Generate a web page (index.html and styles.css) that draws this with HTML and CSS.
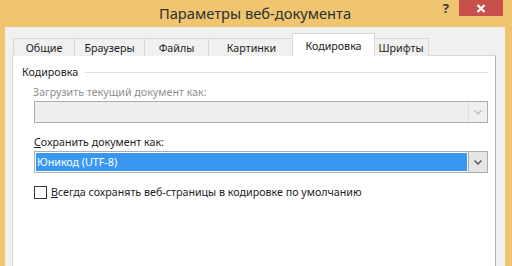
FILE: index.html
```html
<!DOCTYPE html>
<html lang="ru">
<head>
<meta charset="utf-8">
<title>Параметры веб-документа</title>
<link rel="stylesheet" href="styles.css">
</head>
<body>
<div class="window">
  <div class="titlebar">
    <div></div>
    <div class="title">Параметры веб-документа</div>
    <div class="controls">
      <span class="help">?</span>
      <span class="close"><svg width="10" height="9" viewBox="0 0 10 9"><path d="M1.5 1 L8.5 8 M8.5 1 L1.5 8" stroke="#fff" stroke-width="2.2" fill="none"/></svg></span>
    </div>
  </div>
  <div class="frame">
    <div class="tabs">
      <div class="tab t1">Общие</div>
      <div class="tab t2">Браузеры</div>
      <div class="tab t3">Файлы</div>
      <div class="tab t4">Картинки</div>
      <div class="tab active">Кодировка</div>
      <div class="tab t6">Шрифты</div>
    </div>
    <div class="panel">
      <div class="group"><span class="group-label">Кодировка</span><span class="group-line"></span></div>
      <div class="field-label disabled">Загрузить текущий документ как:</div>
      <div class="combo combo-disabled">
        <div class="combo-value"></div>
        <div class="combo-btn"><svg width="8" height="5" viewBox="0 0 8 5"><path d="M0.5 0.5 L4 4 L7.5 0.5" stroke="#b8b8b8" stroke-width="1.3" fill="none"/></svg></div>
      </div>
      <div class="field-label second"><u>С</u>охранить документ как:</div>
      <div class="combo combo-active">
        <div class="combo-value"><span class="sel">Юникод (UTF-8)</span></div>
        <div class="combo-btn"><svg width="8" height="5" viewBox="0 0 8 5"><path d="M0.5 0.5 L4 4 L7.5 0.5" stroke="#555" stroke-width="1.4" fill="none"/></svg></div>
      </div>
      <label class="check"><span class="box"></span><span><u>В</u>сегда сохранять веб-страницы в кодировке по умолчанию</span></label>
    </div>
  </div>
</div>
</body>
</html>
```

FILE: styles.css
```css
html, body {
  margin: 0;
  padding: 0;
}
body {
  width: 512px;
  height: 266px;
  overflow: hidden;
  font-family: "Noto Sans", "Open Sans", sans-serif;
  font-size: 10.7px;
  color: #1e1e1e;
}
.window {
  background: #efc56f;
  height: 266px;
  display: flex;
  flex-direction: column;
}
.titlebar {
  height: 27px;
  display: grid;
  grid-template-columns: 1fr auto 1fr;
  align-items: start;
}
.title {
  font-size: 14.7px;
  color: #2e2e2e;
  line-height: 26px;
  margin-left: -2px;
}
.controls {
  display: flex;
  justify-self: end;
  align-items: flex-start;
  margin-right: 9px;
}
.help {
  font-size: 13px;
  font-weight: bold;
  color: #3a3a3a;
  line-height: 16px;
  margin-right: 10px;
}
.close {
  width: 44px;
  height: 16px;
  background: #c7504d;
  display: flex;
  align-items: center;
  justify-content: center;
}
.frame {
  flex: 1;
  margin: 0 7px 0 5px;
  background: #f0f0f0;
  padding: 7px 9px 0 7px;
  display: flex;
  flex-direction: column;
}
.tabs {
  display: flex;
  align-items: flex-end;
  height: 22px;
  padding-left: 1px;
  margin-bottom: -1px;
  position: relative;
  z-index: 1;
}
.tab {
  height: 17px;
  border: 1px solid #d9d9d9;
  border-bottom: none;
  background: #f0f0f0;
  text-align: center;
  line-height: 18px;
  color: #222;
  margin-right: -1px;
}
.t1 { width: 60px; }
.t2 { width: 69px; }
.t3 { width: 63px; }
.t4 { width: 85px; }
.t6 { width: 54px; }
.tab.active {
  width: 81px;
  height: 22px;
  line-height: 24px;
  background: #fff;
  margin-left: -2px;
  margin-right: -2px;
  position: relative;
  z-index: 2;
}
.panel {
  flex: 1;
  background: #fff;
  border: 1px solid #d9d9d9;
  border-right-color: #b4b4b4;
  border-bottom: none;
  padding: 8px 7px 0 9px;
}
.group {
  display: flex;
  align-items: center;
  height: 16px;
}
.group-label {
  color: #1e1e1e;
}
.group-line {
  flex: 1;
  height: 1px;
  background: #dcdcdc;
  margin-left: 7px;
}
.field-label {
  margin-left: 11px;
  margin-top: 4px;
  height: 16px;
  line-height: 16px;
}
.field-label.disabled {
  color: #8f8f8f;
}
.field-label.second {
  margin-top: 11px;
  margin-left: 12px;
}
.combo {
  margin-left: 12px;
  margin-top: 1px;
  height: 20px;
  border: 1px solid #acacac;
  display: flex;
  background: #fff;
}
.combo-disabled {
  background: #efefef;
}
.combo-value {
  flex: 1;
  display: flex;
  padding: 1px;
}
.sel {
  flex: 1;
  background: #3797f2;
  color: #fff;
  line-height: 18px;
  padding-left: 1px;
}
.combo-btn {
  width: 18px;
  display: flex;
  align-items: center;
  justify-content: center;
}
.combo-active .combo-btn {
  background: #e6e6e6;
  border-left: 1px solid #acacac;
}
.combo-disabled .combo-btn {
  background: #efefef;
  border-left: 1px solid #dedede;
}
.check {
  display: flex;
  align-items: center;
  margin-left: 12px;
  margin-top: 11px;
  height: 16px;
}
.box {
  width: 11px;
  height: 11px;
  border: 1px solid #333;
  background: #fff;
  margin-right: 4px;
}
u {
  text-decoration: underline;
  text-underline-offset: 1px;
}
```
